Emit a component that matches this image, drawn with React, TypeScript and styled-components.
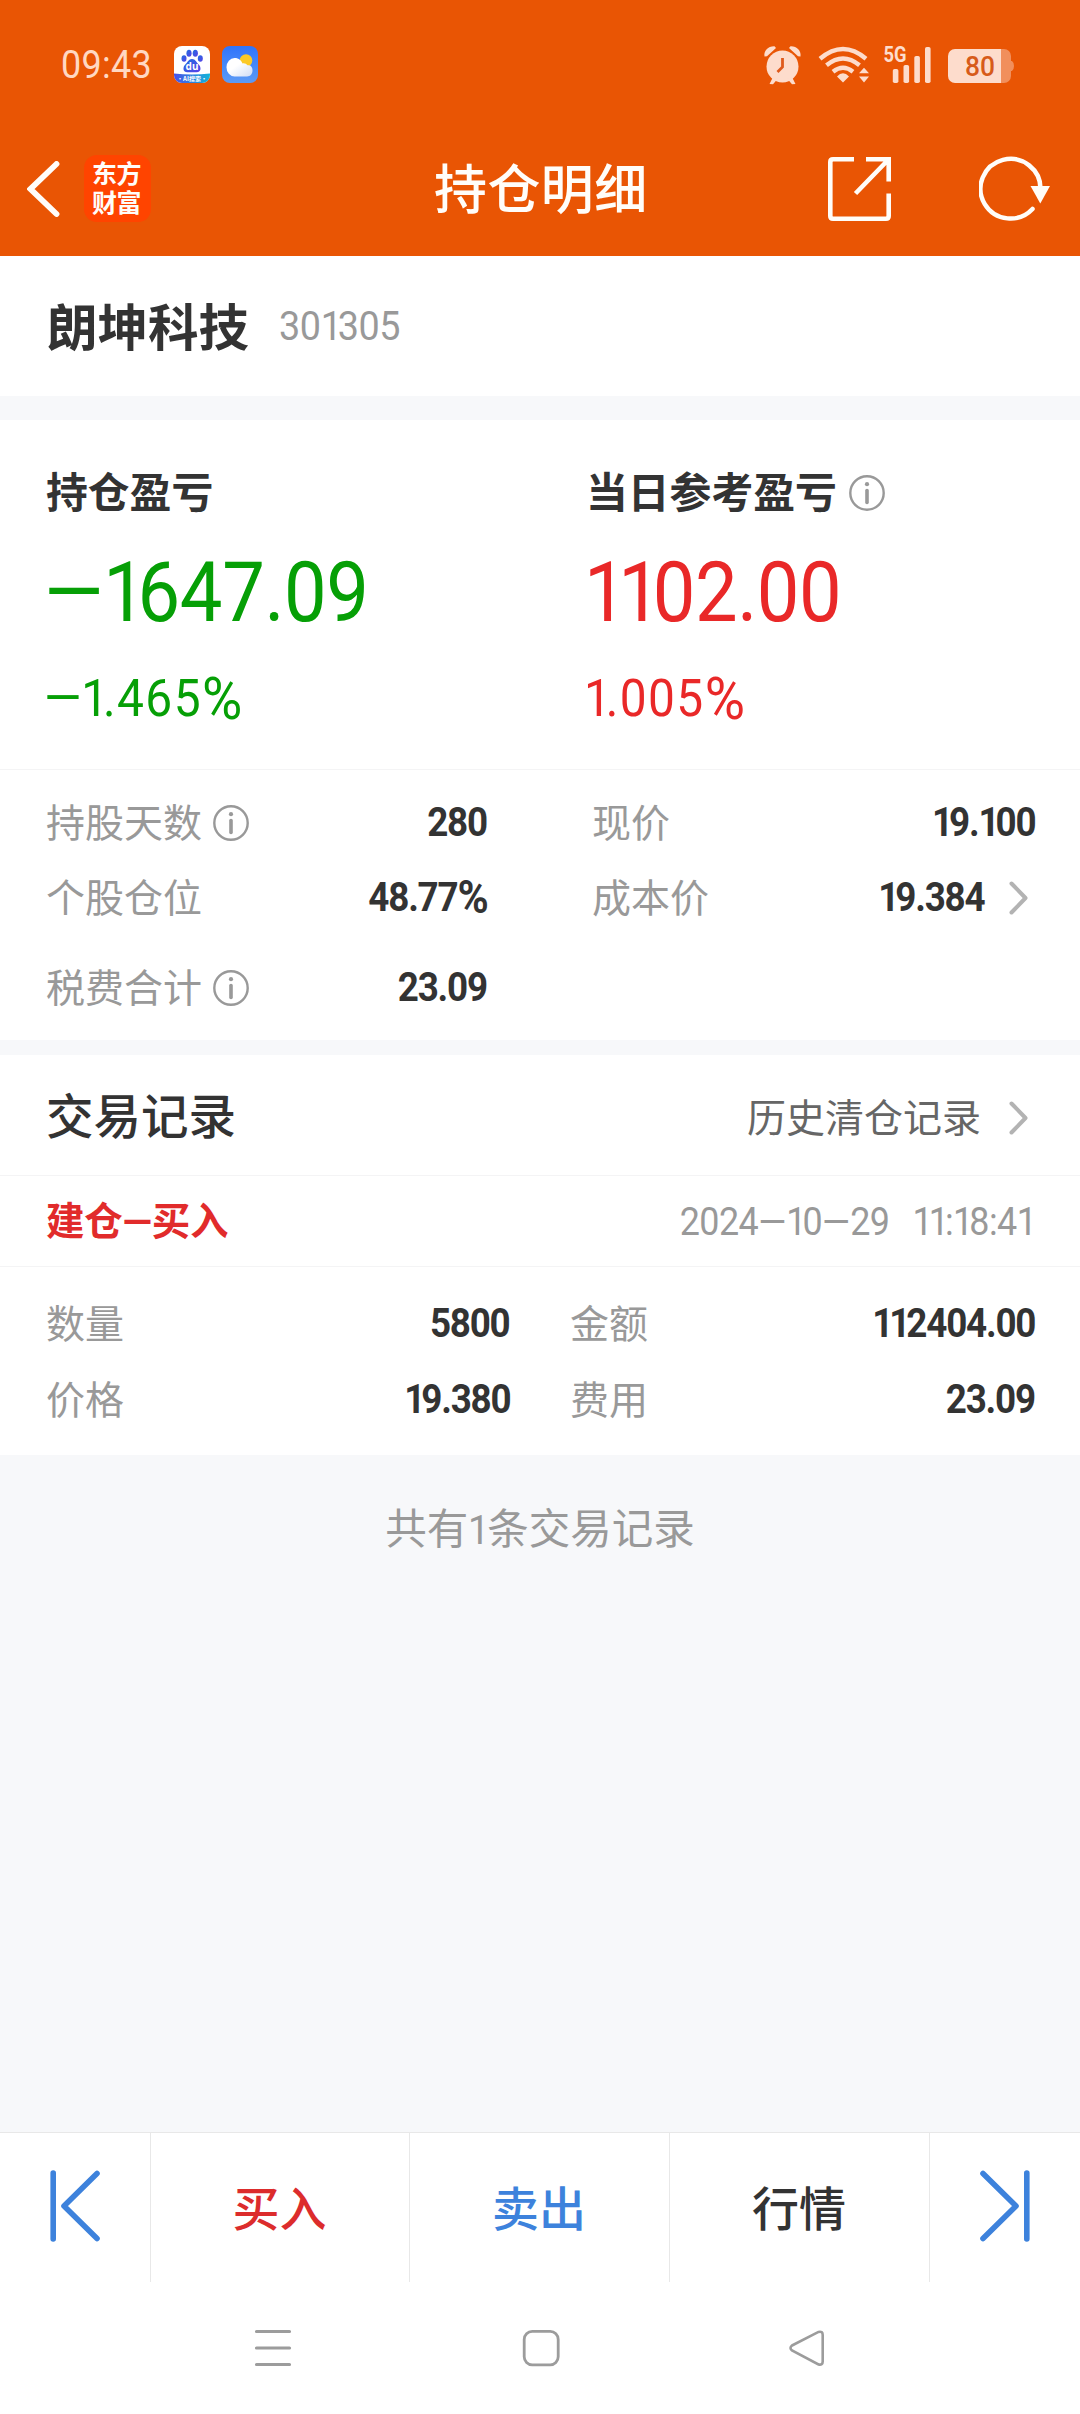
import React from 'react';
import styled, { createGlobalStyle } from 'styled-components';

const GlobalStyle = createGlobalStyle`
  * { box-sizing: border-box; }
  body { margin: 0; background: #f7f8fa; }
`;

const font = `'Noto Sans CJK SC', 'Noto Sans', sans-serif`;
const numberFont = `Roboto, 'Noto Sans CJK SC', sans-serif`;

const Screen = styled.div`
  display: flex;
  flex-direction: column;
  width: 1080px;
  height: 2414px;
  background: #f7f8fa;
  color: #333;
  font-family: ${font};
`;

const Top = styled.header`
  height: 256px;
  background: #e95504;
  color: #fffdf9;
`;

const StatusBar = styled.div`
  display: flex;
  align-items: center;
  height: 129px;
  padding: 0 65px 0 61px;
`;

const Clock = styled.span`
  width: 113px;
  font-family: ${numberFont};
  font-size: 39px;
  line-height: 40px;
  color: #ffd8c2;
`;

const AppIcons = styled.div`
  display: flex;
  gap: 12px;
  margin-right: auto;
`;

const StatusIcons = styled.div`
  display: flex;
  align-items: center;
  svg { display: block; }
`;

const NavBar = styled.div`
  display: grid;
  grid-template-columns: 27px 57px 67px 1fr 63px 88px 72px 29px;
  align-items: center;
  height: 119px;
  svg { display: block; }
`;

const Logo = styled.div`
  grid-column: 3;
  height: 67px;
  padding: 3px 8px 0;
  border-radius: 13px;
  background: #ff4400;
  font-size: 25px;
  font-weight: 700;
  line-height: 29px;
  letter-spacing: -0.5px;
  word-break: break-all;
`;

const Title = styled.h1`
  grid-column: 4;
  margin: 0 0 6px 283px;
  font-size: 53px;
  font-weight: 500;
  line-height: 60px;
  letter-spacing: 0.4px;
  white-space: nowrap;
`;

const StockRow = styled.section`
  display: flex;
  align-items: center;
  height: 140px;
  margin-bottom: 24px;
  padding: 0 47px 0 47px;
  background: #fff;
`;

const StockName = styled.h2`
  width: 232px;
  margin: 0;
  padding-bottom: 5px;
  font-size: 50.5px;
  font-weight: 700;
  line-height: 60px;
`;

const StockCode = styled.span`
  font-family: ${numberFont};
  font-size: 41px;
  line-height: 44px;
  color: #999;
`;

const Profit = styled.section`
  display: grid;
  grid-template-columns: 540px 540px;
  height: 350px;
  padding-top: 46px;
  border-bottom: 1px solid #f4f4f5;
  background: #fff;
`;

const ProfitCol = styled.div<{ $color: string }>`
  padding-left: 46px;
  color: ${(p) => p.$color};
`;

const ProfitLabel = styled.div`
  display: flex;
  align-items: center;
  gap: 12px;
  height: 54px;
  font-size: 41.8px;
  font-weight: 700;
  line-height: 54px;
  color: #333;
`;

const Caption = styled.span`
  padding-bottom: 0.13em;
`;

const Amount = styled.div`
  height: 100px;
  margin: 23px 0 0 -2px;
  font-family: ${numberFont};
  font-size: 82.5px;
  line-height: 100px;
`;

const Percent = styled.div`
  height: 60px;
  margin: 26px 0 0 -2px;
  font-family: ${numberFont};
  font-size: 52px;
  line-height: 60px;
`;

const Digits = styled.span<{ $tight: number; $from: string }>`
  display: inline-block;
  font-family: ${numberFont};
  letter-spacing: ${(p) => p.$tight}em;
  white-space: pre;
  transform: scaleX(0.92);
  transform-origin: ${(p) => p.$from} center;
`;

const One = styled.span`
  letter-spacing: -0.11em;
`;

const Dash = styled.span`
  font-family: ${numberFont};
  letter-spacing: 0;
`;

const PercentSign = styled.span`
  font-size: 1.15em;
  line-height: 0;
  vertical-align: -0.05em;
`;

const Details = styled.section<{ $tracks: string; $height: number; $rows: string; $top: number }>`
  display: grid;
  grid-template-columns: ${(p) => p.$tracks};
  grid-template-rows: ${(p) => p.$rows};
  height: ${(p) => p.$height}px;
  padding: ${(p) => p.$top}px 45px 0 46px;
  background: #fff;
`;

const Field = styled.div<{ $col: number }>`
  grid-column: ${(p) => p.$col};
  display: flex;
  align-items: center;
  font-size: 39px;
  line-height: 50px;
`;

const FieldLabel = styled.span`
  display: flex;
  align-items: center;
  gap: 11px;
  margin-right: auto;
  color: #999;
`;

const FieldValue = styled.span`
  font-family: ${numberFont};
  font-size: 40px;
  font-weight: 700;
`;

const ChevronSlot = styled.span<{ $gap: number }>`
  display: flex;
  margin: 0 7px 0 ${(p) => p.$gap}px;
`;

const RecordsHead = styled.div`
  display: flex;
  align-items: center;
  justify-content: space-between;
  height: 121px;
  margin-top: 15px;
  padding: 5px 45px 0 46px;
  border-bottom: 1px solid #f4f4f5;
  background: #fff;
`;

const SectionTitle = styled.h3`
  margin: 0;
  padding-bottom: 8px;
  font-size: 47.5px;
  font-weight: 500;
  line-height: 60px;
`;

const HistoryLink = styled.a`
  display: flex;
  align-items: center;
  font-size: 39px;
  line-height: 50px;
  color: #666;
`;

const TradeHead = styled.div`
  display: flex;
  align-items: center;
  justify-content: space-between;
  height: 91px;
  padding: 0 47px 0 46px;
  border-bottom: 1px solid #f4f4f5;
  background: #fff;
  font-size: 39px;
  line-height: 50px;
`;

const TradeType = styled.strong`
  padding-bottom: 3px;
  font-size: 38.5px;
  letter-spacing: -0.3px;
  color: #e12b2b;
`;

const TradeTime = styled.time`
  padding-top: 1px;
  font-family: ${numberFont};
  font-size: 39px;
  word-spacing: 16px;
  color: #999;
`;

const Summary = styled.p`
  margin: 45px 0 0;
  font-size: 41.5px;
  line-height: 52px;
  text-align: center;
  color: #999;
`;

const ActionBar = styled.nav`
  display: grid;
  grid-template-columns: 151px 259px 260px 260px 1fr;
  height: 150px;
  margin-top: auto;
  border-top: 1px solid #e8e8e8;
  background: #fff;
`;

const Action = styled.button<{ $color?: string }>`
  display: flex;
  align-items: center;
  justify-content: center;
  padding: 0 1px 4px 0;
  border: 0;
  border-right: 1px solid #e8e8e8;
  background: #fff;
  color: ${(p) => p.$color || '#333'};
  font: 500 47px/60px ${font};
  &:last-child { border-right: 0; }
`;

const SystemNav = styled.div`
  display: flex;
  justify-content: space-between;
  height: 132px;
  padding: 47px 253px 0 254px;
  background: #fff;
`;

const InfoIcon = () => (
  <svg width="36" height="36" viewBox="0 0 36 36" fill="none">
    <circle cx="18" cy="18" r="16.7" stroke="#999" strokeWidth="2.4" />
    <circle cx="18" cy="9.2" r="2.1" fill="#999" />
    <path d="M18 15.5v12" stroke="#999" strokeWidth="3.6" strokeLinecap="round" />
  </svg>
);

const Chevron = () => (
  <svg width="19" height="34" viewBox="0 0 19 34" fill="none">
    <path d="M2.5 2.5 16.5 17 2.5 31.5" stroke="#b3b3b3" strokeWidth="4" strokeLinecap="round" strokeLinejoin="round" />
  </svg>
);

const SkipIcon = ({ flip }: { flip?: boolean }) => (
  <svg width="52" height="72" viewBox="0 0 52 72" fill="none">
    <path
      transform={flip ? 'translate(52 0) scale(-1 1)' : undefined}
      d="M4.2 3v66M48 3.5 15 36 48 68.5"
      stroke="#3d82dc" strokeWidth="5.6" strokeLinecap="round" strokeLinejoin="round"
    />
  </svg>
);

const BaiduIcon = () => (
  <svg width="36" height="37" viewBox="0 0 36 37">
    <defs>
      <linearGradient id="paw" x1="0" y1="0" x2="1" y2="1">
        <stop offset="0" stopColor="#1f6fe0" />
        <stop offset="1" stopColor="#5b3fe8" />
      </linearGradient>
      <linearGradient id="band" x1="0" y1="0" x2="1" y2="0">
        <stop offset="0" stopColor="#4a50e8" />
        <stop offset="1" stopColor="#12b5d8" />
      </linearGradient>
      <clipPath id="tile"><rect width="36" height="37" rx="8" /></clipPath>
    </defs>
    <g clipPath="url(#tile)">
      <rect width="36" height="37" fill="#fff" />
      <path d="M0 27.5q18 2 36 0V37H0z" fill="url(#band)" />
      <g fill="url(#paw)">
        <ellipse cx="10" cy="12.5" rx="2.5" ry="3.2" />
        <ellipse cx="15" cy="7.2" rx="2.6" ry="3.5" />
        <ellipse cx="21.3" cy="7.2" rx="2.6" ry="3.5" />
        <ellipse cx="26.3" cy="12.5" rx="2.5" ry="3.2" />
        <path d="M18 13c3.5 0 4.5 3.5 6.5 5.2 2.5 2 3.5 8-2 8h-9c-5.5 0-4.5-6-2-8C13.5 16.5 14.5 13 18 13z" />
      </g>
      <text x="18" y="24" fontSize="10" fontWeight="700" fontFamily="Noto Sans" fill="#fff" textAnchor="middle">du</text>
      <text x="18" y="34.8" fontSize="6" fontWeight="700" fontFamily="Noto Sans CJK SC" fill="#fff" textAnchor="middle">·AI搜索·</text>
    </g>
  </svg>
);

const WeatherIcon = () => (
  <svg width="36" height="37" viewBox="0 0 36 37">
    <defs>
      <linearGradient id="sky" x1="0" y1="0" x2="0" y2="1">
        <stop offset="0" stopColor="#2f74fb" />
        <stop offset="1" stopColor="#5c9bf6" />
      </linearGradient>
      <linearGradient id="cloud" x1="0" y1="0" x2="1" y2="1">
        <stop offset="0.4" stopColor="#fff" />
        <stop offset="1" stopColor="#cfdcf5" />
      </linearGradient>
    </defs>
    <rect width="36" height="37" rx="8" fill="url(#sky)" />
    <circle cx="24" cy="14.5" r="6.3" fill="#fbc926" />
    <path d="M12.5 30.5a7.8 9 0 0 1 0-18.5c4.5 0 7 2.5 8 5.5 2-.5 4 .5 5 1.8 3-.7 5 1.5 5 5 0 3.5-2 6.2-5.5 6.2z" fill="url(#cloud)" />
  </svg>
);

const StatusGlyphs = () => (
  <svg width="252" height="64" viewBox="763 32 252 64" fill="#fddccc">
    <circle cx="782.5" cy="65.5" r="16" />
    <path d="M764.5 55.5c-1-6 4-10.5 10-10.2l1.5 1.7-9 8.2zM800.5 55.5c1-6-4-10.5-10-10.2l-1.5 1.7 9 8.2z" />
    <path d="m773 76-3.5 7 3.5.3 4.5-5.3zM792 76l3.5 7-3.5.3-4.5-5.3z" />
    <path d="M782.5 57v9l-5 5" fill="none" stroke="#df5a1c" strokeWidth="2.8" />
    <g fill="none" stroke="#fddccc" strokeWidth="4.4">
      <path d="M820 57.7q23-19.5 46 0" />
      <path d="M826.5 64.2q16.5-13.5 33 0" />
      <path d="M833 70.7q10-8 20 0" />
    </g>
    <path d="M837 75.5q6-6.5 12 0l-6 6zM859 72.2l5-5.4 5 5.4zM859 75.4l5 6.2 5-6.2z" />
    <text x="883.5" y="61" fontSize="22" fontWeight="700" textLength="23" lengthAdjust="spacingAndGlyphs" fontFamily="Roboto">5G</text>
    <rect x="892.8" y="68" width="5.6" height="14" rx="1.8" />
    <rect x="903.5" y="64" width="5.6" height="18" rx="1.8" />
    <rect x="914.3" y="55" width="5.6" height="27" rx="1.8" />
    <rect x="925" y="46" width="5.6" height="36" rx="1.8" />
    <path d="M1001 48h3a7 7 0 0 1 7 7v5h1q2 1.5 2 5t-2 5h-1v5a7 7 0 0 1-7 7h-3z" fill="#f18f5c" />
    <path d="M1001 48v34h-46a7 7 0 0 1-7-7V55a7 7 0 0 1 7-7z" />
    <text x="965" y="75" fontSize="28.5" fontWeight="500" textLength="30" lengthAdjust="spacingAndGlyphs" fill="#d75b1a" fontFamily="Roboto">80</text>
  </svg>
);

const BackIcon = () => (
  <svg width="34" height="56" viewBox="0 0 34 56" fill="none">
    <path d="M29.5 3 3.5 28l26 25" stroke="#fffdf9" strokeWidth="5.8" strokeLinecap="round" />
  </svg>
);

const ShareIcon = () => (
  <svg width="64" height="64" viewBox="0 0 64 64" fill="none" stroke="#fffdf9" strokeWidth="4.6">
    <path d="M26 2.3H5q-2.7 0-2.7 2.7v54q0 2.7 2.7 2.7h53q2.7 0 2.7-2.7V36.5" />
    <path d="M38 2.3h22.7v22.2M60 3 27.5 36.5" />
  </svg>
);

const RefreshIcon = () => (
  <svg width="72" height="66" viewBox="0 0 72 66" fill="none">
    <path d="M61.5 33.5A30 29.8 0 1 0 53.5 53" stroke="#fffdf9" strokeWidth="4.5" strokeLinecap="round" />
    <path d="M51.5 30h19.5L61.3 47.5z" fill="#fffdf9" />
  </svg>
);

/* Condensed proportional figures: the narrow "1" sits closer to its neighbour, the percent sign is larger. */
const Num = ({ children, tight = -0.005, from = 'left' }: { children: string; tight?: number; from?: string }) => (
  <Digits $tight={tight} $from={from}>
    {children.split(/([1—%])/).map((part, i) => {
      if (part === '1') return <One key={i}>1</One>;
      if (part === '—') return <Dash key={i}>—</Dash>;
      if (part === '%') return <PercentSign key={i}>%</PercentSign>;
      return part;
    })}
  </Digits>
);

type Item = { label: string; value: string; info?: boolean; link?: boolean; col: number };

const position: Item[] = [
  { label: '持股天数', value: '280', info: true, col: 1 },
  { label: '现价', value: '19.100', col: 3 },
  { label: '个股仓位', value: '48.77%', col: 1 },
  { label: '成本价', value: '19.384', link: true, col: 3 },
  { label: '税费合计', value: '23.09', info: true, col: 1 },
];

const trade: Item[] = [
  { label: '数量', value: '5800', col: 1 },
  { label: '金额', value: '112404.00', col: 3 },
  { label: '价格', value: '19.380', col: 1 },
  { label: '费用', value: '23.09', col: 3 },
];

const Fields = ({ items }: { items: Item[] }) => (
  <>
    {items.map((it) => (
      <Field key={it.label} $col={it.col}>
        <FieldLabel><Caption>{it.label}</Caption>{it.info && <InfoIcon />}</FieldLabel>
        <FieldValue><Num tight={-0.033} from="right">{it.value}</Num></FieldValue>
        {it.link && <ChevronSlot $gap={25}><Chevron /></ChevronSlot>}
      </Field>
    ))}
  </>
);

export default function App() {
  return (
    <>
      <GlobalStyle />
      <Screen>
        <Top>
          <StatusBar>
            <Clock><Num tight={0.01}>09:43</Num></Clock>
            <AppIcons><BaiduIcon /><WeatherIcon /></AppIcons>
            <StatusIcons><StatusGlyphs /></StatusIcons>
          </StatusBar>
          <NavBar>
            <span />
            <BackIcon />
            <Logo>东方财富</Logo>
            <Title>持仓明细</Title>
            <ShareIcon />
            <span />
            <RefreshIcon />
          </NavBar>
        </Top>

        <StockRow>
          <StockName>朗坤科技</StockName>
          <StockCode><Num tight={-0.01}>301305</Num></StockCode>
        </StockRow>

        <Profit>
          <ProfitCol $color="#069f06">
            <ProfitLabel><Caption>持仓盈亏</Caption></ProfitLabel>
            <Amount><Num>—1647.09</Num></Amount>
            <Percent><Num tight={0.03}>—1.465%</Num></Percent>
          </ProfitCol>
          <ProfitCol $color="#e92828">
            <ProfitLabel><Caption>当日参考盈亏</Caption><InfoIcon /></ProfitLabel>
            <Amount><Num>1102.00</Num></Amount>
            <Percent><Num tight={0.03}>1.005%</Num></Percent>
          </ProfitCol>
        </Profit>

        <Details $tracks="441px 105px 443px" $rows="75px 75px 105px" $height={270} $top={15}>
          <Fields items={position} />
        </Details>

        <RecordsHead>
          <SectionTitle>交易记录</SectionTitle>
          <HistoryLink><Caption>历史清仓记录</Caption><ChevronSlot $gap={28}><Chevron /></ChevronSlot></HistoryLink>
        </RecordsHead>
        <TradeHead>
          <TradeType>建仓<Dash>—</Dash>买入</TradeType>
          <TradeTime><Num tight={-0.015} from="right">2024—10—29 11:18:41</Num></TradeTime>
        </TradeHead>
        <Details $tracks="464px 60px 465px" $rows="76px 76px" $height={188} $top={19}>
          <Fields items={trade} />
        </Details>

        <Summary>共有<Num>1</Num>条交易记录</Summary>

        <ActionBar>
          <Action><SkipIcon /></Action>
          <Action $color="#dc2c2c">买入</Action>
          <Action $color="#3d82dc">卖出</Action>
          <Action>行情</Action>
          <Action><SkipIcon flip /></Action>
        </ActionBar>
        <SystemNav>
          <svg width="38" height="38" viewBox="0 0 38 38" stroke="#9c9c9c" strokeWidth="3.2" strokeLinecap="round">
            <path d="M2.5 2.5h33M2.5 19h33M2.5 35.5h33" />
          </svg>
          <svg width="38" height="38" viewBox="0 0 38 38" fill="none" stroke="#9c9c9c" strokeWidth="2.8">
            <rect x="2.2" y="2.4" width="34" height="33.4" rx="8" />
          </svg>
          <svg width="38" height="38" viewBox="0 0 38 38" fill="none" stroke="#9c9c9c" strokeWidth="2.6">
            <path d="M3 16.5 29.5 2.9q4.2-1 4.2 3v26.5q0 4-4.2 3L3 21.5q-3-2.5 0-5z" />
          </svg>
        </SystemNav>
      </Screen>
    </>
  );
}
